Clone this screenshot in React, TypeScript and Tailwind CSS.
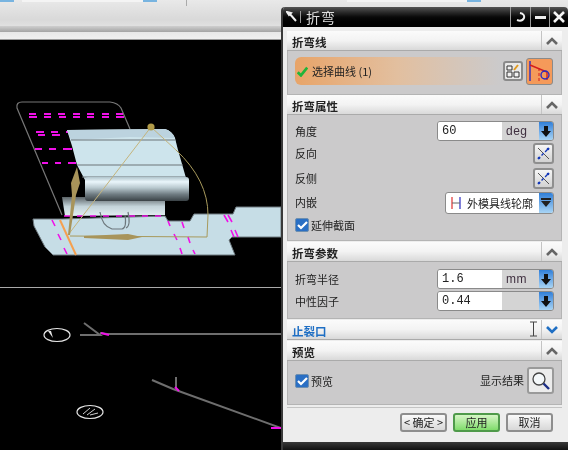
import { FC, ReactNode } from "react";

const Chevron: FC<{ down?: boolean }> = ({ down }) => (
  <svg width="14" height="10" viewBox="0 0 14 10">
    <path
      d={down ? "M2 2 L7 7 L12 2" : "M2 8 L7 3 L12 8"}
      fill="none"
      stroke={down ? "#1f6fc4" : "#666"}
      strokeWidth="2.6"
    />
  </svg>
);

const Header: FC<{ title: string; down?: boolean; className?: string }> = ({ title, down, className }) => (
  <div className="flex h-5 items-stretch bg-gradient-to-b from-[#fbfbfb] via-[#f3f3f3] to-[#d9d9d9] border-b border-[#aaaaaa]">
    <div className={`flex-1 pl-[5px] text-[11.5px] font-bold leading-[22px] ${className ?? "text-[#222]"}`}>{title}</div>
    <div className="flex w-[21px] items-center justify-center border-l border-[#c4c4c4]">
      <Chevron down={down} />
    </div>
  </div>
);

const Panel: FC<{ className: string; children: ReactNode }> = ({ className, children }) => (
  <div className={`relative border-x border-b border-[#b4b4b4] bg-[#cbcacb] ${className}`}>{children}</div>
);

const Spinner: FC<{ value: string; unit: string }> = ({ value, unit }) => (
  <div className="flex h-5 w-[117px] overflow-hidden rounded-[3px] border border-[#8a8a8a] bg-[#d4d4d4]">
    <div className="w-[64px] bg-white pl-[4px] font-['Liberation_Mono',monospace] text-[12px] leading-[18px] text-[#222]">{value}</div>
    <div className="flex-1 pl-[4px] font-['Liberation_Sans',sans-serif] text-[12px] leading-[18px] tracking-[0.5px] text-[#3f2f3f]">{unit}</div>
    <div className="flex w-[14px] items-center justify-center bg-gradient-to-b from-[#2f7fd8] to-[#a8d4f4]">
      <svg width="10" height="11" viewBox="0 0 10 11">
        <path d="M3 0 H7 V5 H10 L5 11 L0 5 H3 Z" fill="#111" />
      </svg>
    </div>
  </div>
);

const FlipButton: FC = () => (
  <div className="flex h-[21px] w-[21px] items-center justify-center rounded-[3px] border-2 border-[#8f8f8f] bg-gradient-to-b from-[#f6f6f6] to-[#d2d2d2]">
    <svg width="15" height="15" viewBox="0 0 15 15">
      <path d="M2 2 L13 13" stroke="#555" strokeWidth="1" />
      <path d="M2 13 L13 2" stroke="#1438b8" strokeWidth="1.4" strokeDasharray="3 2" />
      <circle cx="3" cy="12" r="1.3" fill="#1438b8" />
      <circle cx="12" cy="3" r="1.3" fill="#1438b8" />
    </svg>
  </div>
);

const Check: FC<{ label: string }> = ({ label }) => (
  <div className="flex items-center">
    <div className="flex h-[14px] w-[14px] items-center justify-center rounded-[2px] border border-[#6d8fb0] bg-[#2a6fc4]">
      <svg width="11" height="10" viewBox="0 0 11 10">
        <path d="M1 5 L4 8 L10 2" fill="none" stroke="#fff" strokeWidth="2.2" />
      </svg>
    </div>
    <span className="ml-[2px] text-[11px] leading-[14px] text-[#222]">{label}</span>
  </div>
);

const ActionButton: FC<{ label: string; primary?: boolean }> = ({ label, primary }) => (
  <div
    className={`flex h-[19px] w-[47px] items-center justify-center rounded-[3px] border-2 text-[11px] text-[#222] ${
      primary
        ? "border-[#4f9a4a] bg-gradient-to-b from-[#d5f5c5] to-[#7fdc6a]"
        : "border-[#8e8e8e] bg-gradient-to-b from-[#fafafa] to-[#d8d8d8]"
    }`}
  >
    {label}
  </div>
);

const Model: FC = () => (
  <svg width="281" height="411" viewBox="0 40 281 411" className="block">
    <defs>
      <linearGradient id="roll" x1="0" y1="0" x2="0" y2="1">
        <stop offset="0" stopColor="#b0c4cc" />
        <stop offset="0.2" stopColor="#eaf6fb" />
        <stop offset="0.45" stopColor="#b8c8ce" />
        <stop offset="0.72" stopColor="#707c82" />
        <stop offset="1" stopColor="#3a4246" />
      </linearGradient>
      <linearGradient id="lower" x1="0" y1="0" x2="0" y2="1">
        <stop offset="0" stopColor="#5c6468" />
        <stop offset="0.5" stopColor="#c4d4da" />
        <stop offset="1" stopColor="#e2eef2" />
      </linearGradient>
    </defs>
    {/* flat sheet */}
    <path d="M62 215 L17 108 Q16 102 22 102 L110 102 Q118 103 121 108 L130 129" fill="none" stroke="#777" strokeWidth="1.2" />
    <g stroke="#f010e8" strokeWidth="1.8">
      <path d="M29 114 H36 M44 114 H51 M58 114 H65 M73 114 H80 M87 114 H94 M102 114 H109 M116 114 H123" />
      <path d="M29 117 H37 M44 117 H51 M59 117 H66 M73 117 H80 M87 117 H94 M102 117 H109 M116 117 H124" />
      <path d="M36 132 H44 M51 132 H58 M66 132 H69 M38 135 H45 M52 135 H60" />
      <path d="M35 149 H42 M49 149 H56 M63 149 H72 M42 163 H48 M55 163 H61 M68 163 H76" />
    </g>
    {/* base plate */}
    <path
      d="M33 219 L62 219 L165 216 L168 221 L190 221 L194 214 L233 214 L236 207 L281 207 L281 237 L232 237 L229 240 L235 255 L53 255 L45 247 L34 226 Z"
      fill="#c6dde6"
      stroke="#6f7a80"
      strokeWidth="1"
    />
    {/* upper bent flange */}
    <path d="M67 130 L165 129 Q172 131 175 138 L178 150 L186 178 L85 180 L77 165 L72 146 Z" fill="#cde4ec" />
    <path d="M67 130 L165 129 Q172 131 175 138 L130 137 L71 140 Z" fill="#bcd3df" />
    <path d="M71 140 H175 M77 165 H183 M82 177 H186" stroke="#6d7478" strokeWidth="1" />
    <path d="M62 197 H165 V215 L65 216 Z" fill="url(#lower)" />
    <rect x="85" y="177" width="104" height="24" rx="3" fill="url(#roll)" />
    {/* magenta bend lines */}
    <g stroke="#f010e8" strokeWidth="1.6">
      <path d="M64 216 H165" strokeDasharray="6 7" />
      <path d="M52 220 L55 226 M58 234 L61 240 M64 248 L67 254" />
      <path d="M168 221 L170 226 M174 234 L177 240 M180 248 L182 254" />
      <path d="M182 222 L184 228 M188 237 L190 243 M193 250 L195 254" />
      <path d="M224 215 L228 222 M228 215 L232 222 M231 230 L234 237 M235 230 L238 237" />
    </g>
    <path d="M125 215 Q127 228 122 229 H112 Q102 226 100 212" fill="none" stroke="#6d777c" strokeWidth="1.2" />
    <path d="M128 212 Q131 226 126 228" fill="none" stroke="#6d777c" strokeWidth="1.2" />
    {/* orange bend line and tan handles */}
    <path d="M60 220 L76 255" stroke="#f5a04f" strokeWidth="2" />
    <g fill="none" stroke="#c4b47c" strokeWidth="1">
      <path d="M68 235 L151 127 L176 150" />
      <path d="M176 150 Q208 180 208 215 L207 237 L70 236" stroke="#a89a5c" />
    </g>
    <path d="M77 167 L80 183 L76 195 L70 235 L68 235 L72 195 L71 183 Z" fill="#a8945a" />
    <path d="M84 236 L128 234 L142 237 L128 240 L84 238 Z" fill="#a8945a" />
    <circle cx="151" cy="127" r="3.6" fill="#b09a48" />
    {/* section views */}
    <path d="M80 335 H100 L84 323 M100 333 L107 334 H281" fill="none" stroke="#6e6e6e" strokeWidth="2" />
    <path d="M101 333 L109 335" stroke="#f010e8" strokeWidth="2" />
    <ellipse cx="57" cy="335" rx="13" ry="6.5" fill="#000" stroke="#e6e6e6" strokeWidth="1.2" />
    <path d="M48 331 L53 338 L51 331 Z" fill="#e6e6e6" />
    <path d="M152 380 L173 389 L281 428 M176 377 V388" fill="none" stroke="#6e6e6e" strokeWidth="2" />
    <path d="M175 387 L179 391 M271 428 H281" stroke="#f010e8" strokeWidth="2" />
    <ellipse cx="90" cy="412" rx="13" ry="6.5" fill="#000" stroke="#e6e6e6" strokeWidth="1.2" />
    <path d="M83 414 L90 408 M87 415 L95 409 M90 415 L98 413" stroke="#cfcfcf" strokeWidth="1" />
  </svg>
);

export default function App() {
  return (
    <div className="relative h-[450px] w-[568px] overflow-hidden bg-black font-['Noto_Sans_CJK_SC','Liberation_Sans',sans-serif] blur-[0.4px]">
      {/* main window toolbar */}
      <div className="h-10 border-b border-[#9a9a9a] bg-gradient-to-b from-[#e9e9e9] via-[#d9d9d9] to-[#f0f0f0]">
        <div className="flex h-[2px]">
          <div className="w-[14px] bg-[#78b4e0]" />
          <div className="ml-2 flex w-[135px] justify-end bg-[#f4f4f4]">
            <div className="w-[14px] bg-[#78b4e0]" />
          </div>
          <div className="ml-[29px] h-[6px] w-px bg-[#aaaaaa]" />
          <div className="ml-[160px] flex w-[134px] justify-end bg-[#f4f4f4]">
            <div className="w-[14px] bg-[#78b4e0]" />
          </div>
        </div>
        <div className="mt-[24px] h-[6px] bg-gradient-to-b from-[#cfcfcf] to-[#a4a4a4]" />
      </div>
      {/* graphics window */}
      <div className="relative h-[410px] w-[281px]">
        <div className="absolute left-0 top-[247px] h-px w-full bg-[#a9a9a9]" />
        <Model />
      </div>

      {/* bend dialog */}
      <div className="absolute left-[281px] top-[7px] h-[443px] w-[287px] overflow-hidden rounded-t-[4px] border-l-2 border-[#3a3a3a] bg-[#ededed]">
        <div className="flex h-5 items-center bg-gradient-to-b from-[#555] via-[#0a0a0a] to-black text-white">
          <div className="flex w-[18px] justify-center border-r border-[#999]">
            <svg width="12" height="12" viewBox="0 0 12 12">
              <path d="M1 1 L5 2 L3 4 Z M3 2 L10 10" stroke="#eee" strokeWidth="2" fill="#eee" />
            </svg>
          </div>
          <div className="flex-1 pl-[5px] text-[14px] leading-5 tracking-[1px] text-[#ddd]">折弯</div>
          <div className="flex h-full w-5 items-center justify-center border-l border-[#999]">
            <svg width="11" height="11" viewBox="0 0 11 11">
              <path d="M5 1 Q10 2 9 6 Q7 10 2 8" fill="none" stroke="#eee" strokeWidth="2" />
            </svg>
          </div>
          <div className="flex h-full w-[19px] items-center justify-center border-l border-[#999]">
            <div className="h-[3px] w-[11px] bg-[#eee]" />
          </div>
          <div className="flex h-full w-[19px] items-center justify-center border-l border-[#999]">
            <svg width="12" height="12" viewBox="0 0 12 12">
              <path d="M1 1 L11 11 M11 1 L1 11" stroke="#f4f4f4" strokeWidth="2.6" />
            </svg>
          </div>
        </div>

        <div className="pl-[4px] pr-[6px] pt-1">
          <Header title="折弯线" />
          <Panel className="h-[44px]">
            <div className="flex items-center px-[7px] pt-[6px]">
              <div className="flex h-[28px] w-[205px] items-center rounded-l-[6px] bg-gradient-to-r from-[#e8a468] via-[#e2bf9f] to-[#cbcacb] pl-[1px] text-[11px] text-[#222]">
                <svg width="11" height="11" viewBox="0 0 14 14" className="ml-[1px] mr-[4px]">
                  <path d="M1 8 L5 12 L13 2" fill="none" stroke="#1fb53a" strokeWidth="3.4" />
                </svg>
                <span>选择曲线 (1)</span>
              </div>
              <div className="ml-[3px] flex h-[20px] w-[20px] items-center justify-center rounded-[3px] border-2 border-[#8a8a8a] bg-[#e8e8e8]">
                <svg width="14" height="14" viewBox="0 0 14 14">
                  <path d="M1 2 H6 V6 H1 Z M1 8 H6 V13 H1 Z M8 8 H13 V13 H8 Z" fill="#f2f2f2" stroke="#333" />
                  <path d="M8 6 L12 1" stroke="#e09a20" strokeWidth="2" />
                </svg>
              </div>
              <div className="ml-[3px] flex h-[27px] w-[27px] items-center justify-center rounded-[3px] border border-[#8a8a8a] bg-[#f59a5a]">
                <svg width="23" height="23" viewBox="0 0 23 23">
                  <path d="M2 1 V21" stroke="#2b2bc0" strokeWidth="1.4" />
                  <path d="M2 5 L19 12 V20" fill="none" stroke="#d41d1d" strokeWidth="1.4" />
                  <path d="M11 8 V21" stroke="#d41d1d" strokeWidth="1" strokeDasharray="3 2" />
                  <circle cx="17" cy="15" r="4" fill="none" stroke="#2b2bc0" strokeWidth="1.4" />
                </svg>
              </div>
            </div>
          </Panel>

          <Header title="折弯属性" />
          <Panel className="h-[126px]">
            <div className="flex flex-col px-[7px] pt-[6px] text-[11px] text-[#222]">
              <div className="flex h-5 items-center justify-between">
                <span>角度</span>
                <Spinner value="60" unit="deg" />
              </div>
              <div className="mt-[2px] flex h-[21px] items-center justify-between">
                <span>反向</span>
                <FlipButton />
              </div>
              <div className="mt-[4px] flex h-[21px] items-center justify-between">
                <span>反侧</span>
                <FlipButton />
              </div>
              <div className="mt-[2px] flex h-[23px] items-center justify-between">
                <span>内嵌</span>
                <div className="flex h-[22px] w-[109px] overflow-hidden rounded-[3px] border border-[#8a8a8a] bg-white">
                  <svg width="21" height="20" viewBox="0 0 21 20" className="shrink-0">
                    <path d="M6 4 V16" stroke="#e03030" strokeWidth="1.2" />
                    <path d="M14 4 V16" stroke="#2b2bc0" strokeWidth="1.2" />
                    <path d="M6 10 H14" stroke="#666" strokeWidth="1" />
                  </svg>
                  <span className="flex-1 whitespace-nowrap text-[11px] leading-5">外模具线轮廓</span>
                  <div className="flex w-[14px] items-center justify-center bg-gradient-to-b from-[#2f7fd8] to-[#a8d4f4]">
                    <svg width="10" height="9" viewBox="0 0 10 9">
                      <path d="M0 0 H10 V2 H0 Z M0 3 H10 L5 9 Z" fill="#222" />
                    </svg>
                  </div>
                </div>
              </div>
              <div className="mt-[4px]">
                <Check label="延伸截面" />
              </div>
            </div>
          </Panel>

          <div className="mt-px">
            <Header title="折弯参数" />
          </div>
          <Panel className="h-[57px]">
            <div className="flex flex-col gap-[2px] px-[7px] pt-[7px] text-[11px] text-[#222]">
              <div className="flex items-center justify-between">
                <span>折弯半径</span>
                <Spinner value="1.6" unit="mm" />
              </div>
              <div className="flex items-center justify-between">
                <span>中性因子</span>
                <Spinner value="0.44" unit="" />
              </div>
            </div>
          </Panel>

          <div className="relative mt-px">
            <Header title="止裂口" down className="text-[#1f6fc4]" />
            {/* mouse cursor */}
            <svg width="9" height="16" viewBox="0 0 9 16" className="absolute left-[242px] top-[1px]">
              <path d="M1 1 H8 M4.5 1 V15 M1 15 H8" stroke="#444" strokeWidth="1" fill="none" />
            </svg>
          </div>
          <div className="mt-px">
            <Header title="预览" />
          </div>
          <Panel className="h-[44px]">
            <div className="flex items-center justify-between px-[7px] pt-[6px] text-[11px] text-[#222]">
              <Check label="预览" />
              <div className="flex items-center">
                <span className="mr-[3px]">显示结果</span>
                <div className="flex h-[27px] w-[27px] items-center justify-center rounded-[3px] border-2 border-[#9a9a9a] bg-[#ececec]">
                  <svg width="20" height="20" viewBox="0 0 20 20">
                    <circle cx="8" cy="8" r="6" fill="#f4f8fa" stroke="#444" strokeWidth="1.3" />
                    <path d="M12.5 12.5 L18 18" stroke="#1c2f86" strokeWidth="2.4" />
                  </svg>
                </div>
              </div>
            </div>
          </Panel>

          <div className="mt-[2px] border-t border-[#c4c4c4]" />
          <div className="mt-[5px] flex justify-end gap-[6px] pr-[9px]">
            <ActionButton label="< 确定 >" />
            <ActionButton label="应用" primary />
            <ActionButton label="取消" />
          </div>
        </div>
        <div className="absolute bottom-0 left-0 h-[8px] w-full bg-gradient-to-b from-[#3a3a3a] to-[#111]" />
      </div>
    </div>
  );
}
